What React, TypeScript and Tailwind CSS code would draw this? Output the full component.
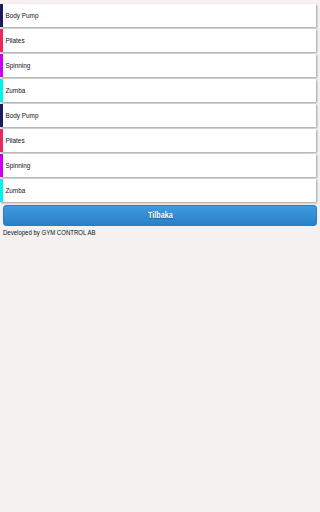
const classes = [
  { name: "Body Pump", bar: "bg-[#1c1c5c]" },
  { name: "Pilates", bar: "bg-[#ea2a5c]" },
  { name: "Spinning", bar: "bg-[#c800ee]" },
  { name: "Zumba", bar: "bg-[#00f2ec]" },
  { name: "Body Pump", bar: "bg-[#1c1c5c]" },
  { name: "Pilates", bar: "bg-[#ea2a5c]" },
  { name: "Spinning", bar: "bg-[#c800ee]" },
  { name: "Zumba", bar: "bg-[#00f2ec]" },
];

export default function App() {
  return (
    <div className="min-h-[512px] bg-[#f4f1f0] pt-[4px] font-['Liberation_Sans',Arial,sans-serif] text-[#111]">
      <ul className="flex flex-col gap-[2px] pr-[4px]">
        {classes.map((item, i) => (
          <li key={i} className="flex h-[23px] items-center bg-white shadow-[1px_1px_2px_rgba(0,0,0,0.35)]">
            <span className={`h-full w-[3px] shrink-0 ${item.bar}`} />
            <span className="inline-block origin-left scale-x-[0.8] pl-[3px] text-[8px] leading-none">{item.name}</span>
          </li>
        ))}
      </ul>
      <div className="px-[3px] pt-[3px]">
        <button className="flex h-[21px] w-full items-center justify-center rounded-[3px] border border-[#2a7cbf] bg-gradient-to-b from-[#3e9be0] to-[#2a80c6] text-[9px] font-bold text-white [text-shadow:0_1px_1px_rgba(0,0,0,0.35)]">
          <span className="inline-block scale-x-[0.8]">Tilbaka</span>
        </button>
        <p className="origin-left scale-x-[0.86] pt-[2px] text-[7px] leading-[10px] whitespace-nowrap">Developed by GYM CONTROL AB</p>
      </div>
    </div>
  );
}
